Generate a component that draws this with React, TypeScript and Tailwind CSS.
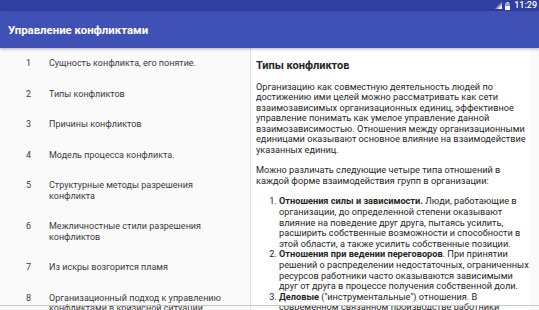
import React from "react";

const topics = [
  "Сущность конфликта, его понятие.",
  "Типы конфликтов",
  "Причины конфликтов",
  "Модель процесса конфликта.",
  "Структурные методы разрешения конфликта",
  "Межличностные стили разрешения конфликтов",
  "Из искры возгорится пламя",
  "Организационный подход к управлению конфликтами в кризисной ситуации.",
];

const relations = [
  {
    title: "Отношения силы и зависимости.",
    text: " Люди, работающие в организации, до определенной степени оказывают влияние на поведение друг друга, пытаясь усилить, расширить собственные возможности и способности в этой области, а также усилить собственные позиции.",
  },
  {
    title: "Отношения при ведении переговоров",
    text: ". При принятии решений о распределении недостаточных, ограниченных ресурсов работники часто оказываются зависимыми друг от друга в процессе получения собственной доли.",
  },
  {
    title: "Деловые",
    text: " (\"инструментальные\") отношения. В современном связанном производстве работники зависят друг от друга.",
  },
];

function StatusBar() {
  return (
    <div className="h-[11px] bg-[#303f9f] flex items-center justify-end pr-[2px] gap-[3px]">
      <svg width="7" height="7" viewBox="0 0 7 7">
        <polygon points="0,7 7,7 7,0" fill="#ffffff" opacity="0.5" />
        <polygon points="3,7 7,7 7,3" fill="#ffffff" />
      </svg>
      <svg width="5" height="8" viewBox="0 0 5 8">
        <rect x="1.5" y="0" width="2" height="1" fill="#ffffff" />
        <rect x="0" y="1" width="5" height="7" fill="#ffffff" opacity="0.5" />
        <rect x="0" y="4" width="5" height="4" fill="#ffffff" />
      </svg>
      <span className="text-[9px] font-medium text-white leading-none ml-[1px]">11:29</span>
    </div>
  );
}

export default function App() {
  return (
    <div className="w-[539px] h-[310px] overflow-hidden bg-[#fafafa] flex flex-col relative" style={{ fontFamily: "Roboto, sans-serif" }}>
      <StatusBar />
      <div className="h-[37px] bg-[#3f51b5] flex items-center px-[8px] pt-[3px] shadow-[0_1px_3px_rgba(0,0,0,0.3)] z-10">
        <h1 className="text-white text-[11.4px] font-bold">Управление конфликтами</h1>
      </div>
      <div className="flex flex-1 min-h-0">
        <ul className="w-[251px] shrink-0 border-r border-[#e4e4e4]">
          {topics.map((t, i) => (
            <li key={i} className="flex py-[10px] text-[9px] leading-[10.5px] text-[#3a3a3a]">
              <span className="w-[49px] pl-[26px] shrink-0">{i + 1}</span>
              <span className="w-[185px]">{t}</span>
            </li>
          ))}
        </ul>
        <div className="w-[279px] bg-white pl-[5px] pt-[12px] text-[#262626] text-[9.2px] leading-[10.6px]">
          <h2 className="text-[11px] font-bold leading-[12px] mb-[9.5px]">Типы конфликтов</h2>
          <p className="mb-[9.8px]">
            Организацию как совместную деятельность людей по достижению ими целей можно рассматривать как сети взаимозависимых организационных единиц, эффективное управление понимать как умелое управление данной взаимозависимостью. Отношения между организационными единицами оказывают основное влияние на взаимодействие указанных единиц.
          </p>
          <p className="mb-[9.8px]">
            Можно различать следующие четыре типа отношений в каждой форме взаимодействия групп в организации:
          </p>
          <ol className="pl-[23px] list-decimal">
            {relations.map((r, i) => (
              <li key={i}>
                <b>{r.title}</b>
                {r.text}
              </li>
            ))}
          </ol>
        </div>
      </div>
      <div className="absolute left-0 right-0 bottom-[4px] h-px bg-[#c8c8c8]" />
    </div>
  );
}
